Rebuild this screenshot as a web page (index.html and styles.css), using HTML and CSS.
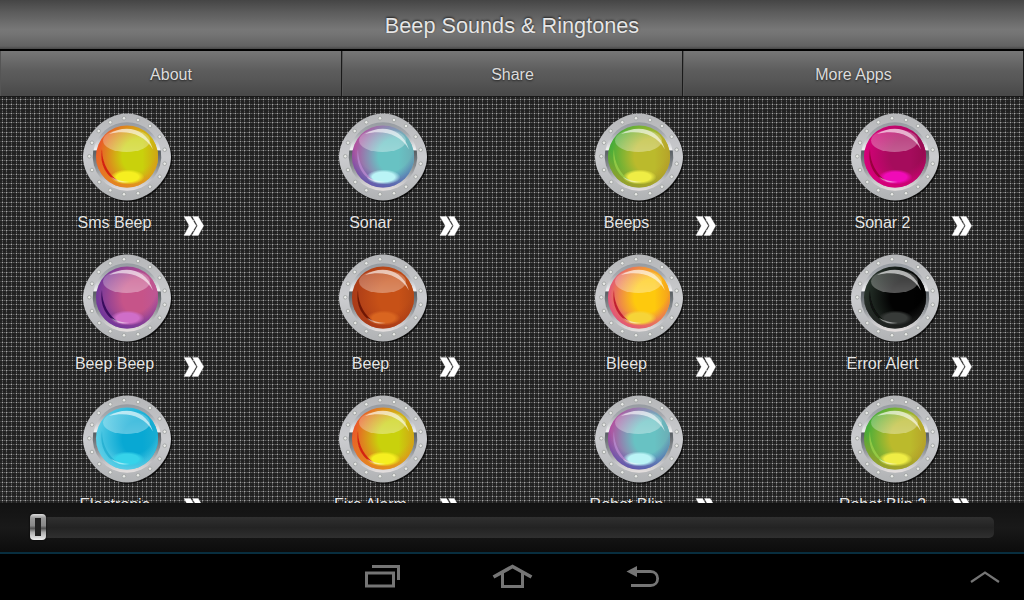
FILE: index.html
```html
<!DOCTYPE html>
<html lang="en">
<head>
    <meta charset="UTF-8">
    <meta name="viewport" content="width=device-width, initial-scale=1.0">
    <title>Beep Sounds &amp; Ringtones</title>
    <link rel="stylesheet" href="styles.css">
</head>
<body>
    <!-- shared shapes -->
    <svg class="defs" width="0" height="0">
        <defs>
            <pattern id="mesh" width="14" height="14" patternUnits="userSpaceOnUse">
                <rect width="14" height="14" fill="#212121"/>
                <g fill="#3e3e3e">
                    <path d="M0 2h14v1H0zM0 7h14v1H0zM0 11h14v1H0z"/>
                    <path d="M2 0h1v14H2zM6 0h1v14H6zM11 0h1v14H11z"/>
                </g>
                <g fill="#5c5c5c">
                    <path d="M4 2h1v1H4zM9 2h1v1H9zM13 2h1v1H13zM4 7h1v1H4zM9 7h1v1H9zM13 7h1v1H13zM4 11h1v1H4zM9 11h1v1H9zM13 11h1v1H13z"/>
                    <path d="M2 0h1v1H2zM6 0h1v1H6zM11 0h1v1H11zM2 4h1v1H2zM6 4h1v1H6zM11 4h1v1H11zM2 9h1v1H2zM6 9h1v1H6zM11 9h1v1H11z"/>
                </g>
                <g fill="#5a5a5a">
                    <path d="M6 3h1v1H6zM6 8h1v1H6zM6 12h1v1H6zM2 6h1v1H2zM11 6h1v1H11z"/>
                    <path d="M7 2h1v1H7zM7 7h1v1H7zM7 11h1v1H7zM10 2h1v1H10zM10 7h1v1H10zM10 11h1v1H10z"/>
                </g>
                <path fill="#a6a6a6" d="M2 2h1v1H2zM6 2h1v1H6zM11 2h1v1H11zM2 7h1v1H2zM6 7h1v1H6zM11 7h1v1H11zM2 11h1v1H2zM6 11h1v1H6zM11 11h1v1H11z"/>
            </pattern>
            <linearGradient id="metal" x1="0" y1="0" x2="0" y2="1">
                <stop offset="0" stop-color="#b5b6b8"/>
                <stop offset=".5" stop-color="#cbcccf"/>
                <stop offset="1" stop-color="#b0b2b4"/>
            </linearGradient>
            <linearGradient id="rimTop" x1="0" y1="0" x2="0" y2="1">
                <stop offset="0" stop-color="#969ba1"/>
                <stop offset=".4" stop-color="#a6a9ae"/>
                <stop offset="1" stop-color="#f4f4f5"/>
            </linearGradient>
            <linearGradient id="rimBottom" x1="0" y1="0" x2="0" y2="1">
                <stop offset="0" stop-color="#565c61"/>
                <stop offset=".4" stop-color="#898d91"/>
                <stop offset=".75" stop-color="#c5c5c8"/>
                <stop offset="1" stop-color="#e6e0df"/>
            </linearGradient>
            <linearGradient id="shine" x1="0" y1="0" x2="0" y2="1">
                <stop offset="0" stop-color="#fff" stop-opacity=".2"/>
                <stop offset="1" stop-color="#fff" stop-opacity=".33"/>
            </linearGradient>
            <filter id="soft" x="-20%" y="-20%" width="140%" height="140%">
                <feGaussianBlur stdDeviation=".7"/>
            </filter>
            <g id="frame">
                <path d="M45 1.500C68 1.500 89 24.500 89 45S68 88.500 45 88.500 1 65.500 1 45 22 1.500 45 1.500z" fill="#000" opacity=".7" transform="translate(1.200 1.200)" filter="url(#soft)"/>
                <path d="M45 1.500C68 1.500 89 24.500 89 45S68 88.500 45 88.500 1 65.500 1 45 22 1.500 45 1.500z" fill="url(#metal)"/>
                <g fill="#e9eae7" stroke="#a3a6a5" stroke-width=".9">
                    <circle cx="42" cy="6.3" r="1.8"/><circle cx="56" cy="8" r="1.8"/><circle cx="68" cy="14" r="1.8"/>
                    <circle cx="77.7" cy="24.7" r="1.8"/><circle cx="82.7" cy="37.7" r="1.8"/><circle cx="82.7" cy="51.7" r="1.8"/>
                    <circle cx="77.7" cy="64.7" r="1.8"/><circle cx="68" cy="74.7" r="1.8"/><circle cx="56" cy="81.3" r="1.8"/>
                    <circle cx="42" cy="82.3" r="1.8"/><circle cx="28.3" cy="78.3" r="1.8"/><circle cx="17.3" cy="70" r="1.8"/>
                    <circle cx="10" cy="58" r="1.8"/><circle cx="7.3" cy="44.3" r="1.8"/><circle cx="10" cy="30.7" r="1.8"/>
                    <circle cx="16.7" cy="19" r="1.8"/><circle cx="28.3" cy="10.3" r="1.8"/>
                </g>
                <path d="M11.5 38.5A34 34 0 0 1 78.5 38.5z" fill="url(#rimTop)"/>
                <path d="M11.2 38.5A34.3 34.3 0 1 0 78.8 38.5z" fill="url(#rimBottom)"/>
            </g>
            <g id="gloss">
                <ellipse cx="44.5" cy="28.5" rx="23.5" ry="11.5" fill="url(#shine)"/>
                <path d="M27 22C41 13 64 14 71 37.500 62 22 45 17.500 27 22z" fill="#fff" opacity=".6"/>
            </g>
            <symbol id="more" viewBox="0 0 22 22">
                <path d="M1 1.500h6.500l5.700 9.300L7 20.500H1l5.300-9.700zM9.500 1.500h5.700l5.500 9.300-5.500 9.700H9l5.500-9.700z" fill="#fff" stroke="#eee" stroke-opacity=".4" stroke-width=".8"/>
            </symbol>
        </defs>
    </svg>

    <header class="title-bar">
        <h1>Beep Sounds &amp; Ringtones</h1>
    </header>

    <nav class="tabs">
        <a class="tab">About</a>
        <a class="tab">Share</a>
        <a class="tab">More Apps</a>
    </nav>

    <main class="board">
        <svg class="mesh"><rect width="100%" height="100%" fill="url(#mesh)"/></svg>
        <div class="grid" id="grid"></div>
    </main>

    <footer class="player">
        <div class="track"><div class="thumb"></div></div>
    </footer>

    <div class="system-bar">
        <svg class="keys" viewBox="0 0 300 46" fill="none" stroke="#757575">
            <path d="M6.500 19h27v13h-27z" stroke-width="3"/>
            <path d="M12 12.500h26.500V26" stroke-width="3"/>
            <path d="M133.500 23l19-10.500 19 10.500" stroke-width="3.600"/>
            <path d="M142.500 19v13.500h20V19" stroke-width="3"/>
            <path d="M276 17.500h14.500c9.500 0 9.500 14 0 14H271" stroke-width="2.800"/>
            <path d="M266.500 17.500l10.500-5.500v11z" fill="#757575" stroke="none"/>
        </svg>
        <svg class="expand" viewBox="0 0 30 14" fill="none" stroke="#757575" stroke-width="2.200">
            <path d="M1 12L15 2.500 29 12"/>
        </svg>
    </div>

    <script>
        // edge, middle, right, bottom glow, left crescent
        const colors = {
            citrus: ['#ee4a2c', '#c9d10c', '#d0a514', '#f6ef20', '#d01010'],
            aqua:   ['#b9449c', '#68c2c3', '#6cadb5', '#baf4f6', '#b98bd0'],
            lime:   ['#37aa3b', '#bbba2c', '#b6a329', '#efed45', '#9ad04a'],
            pink:   ['#d9007b', '#a50c5c', '#960a50', '#f00bb7', '#8c0030'],
            violet: ['#6d359b', '#c65489', '#bd5795', '#cf6ec8', '#260450'],
            rust:   ['#a83a18', '#c75117', '#b44816', '#d96520', '#601006'],
            amber:  ['#e0507c', '#fec90d', '#f5a01d', '#f6d438', '#b70e28'],
            black:  ['#2b382f', '#020202', '#000000', '#373a38', '#080a08'],
            blue:   ['#5ecfe7', '#08a8d3', '#1aaed2', '#36d3ea', '#23aed0']
        };
        // tint along the lower edge where it differs from the left one
        const lowColors = { citrus: '#e58a22', aqua: '#4a55ae', lime: '#b09a28', black: '#222222' };
        const sounds = [
            ['Sms Beep', 'citrus'], ['Sonar', 'aqua'], ['Beeps', 'lime'], ['Sonar 2', 'pink'],
            ['Beep Beep', 'violet'], ['Beep', 'rust'], ['Bleep', 'amber'], ['Error Alert', 'black'],
            ['Electronic', 'blue'], ['Fire Alarm', 'citrus'], ['Robot Blip', 'aqua'], ['Robot Blip 2', 'lime']
        ];

        document.getElementById('grid').innerHTML = sounds.map(([name, key], i) => {
            const [edge, mid, right, glow, crescent] = colors[key];
            const low = lowColors[key] || edge;
            return `
            <div class="sound">
                <svg class="button" viewBox="0 0 90 90">
                    <defs>
                        <radialGradient id="ball${i}" cx=".72" cy=".5" r=".74">
                            <stop offset="0" stop-color="${mid}"/>
                            <stop offset=".4" stop-color="${mid}"/>
                            <stop offset="1" stop-color="${edge}"/>
                        </radialGradient>
                        <radialGradient id="low${i}" cx=".52" cy=".3" r=".72">
                            <stop offset=".65" stop-color="${low}" stop-opacity="0"/>
                            <stop offset="1" stop-color="${low}" stop-opacity=".85"/>
                        </radialGradient>
                        <linearGradient id="side${i}">
                            <stop offset=".75" stop-color="${right}" stop-opacity="0"/>
                            <stop offset="1" stop-color="${right}"/>
                        </linearGradient>
                        <radialGradient id="glow${i}">
                            <stop offset=".65" stop-color="${glow}"/>
                            <stop offset="1" stop-color="${glow}" stop-opacity="0"/>
                        </radialGradient>
                    </defs>
                    <use href="#frame"/>
                    <circle cx="45" cy="44.500" r="31" fill="url(#ball${i})"/>
                    <circle cx="45" cy="44.500" r="31" fill="url(#side${i})"/>
                    <circle cx="45" cy="44.500" r="31" fill="url(#low${i})"/>
                    <ellipse cx="45.500" cy="65" rx="17" ry="7.500" fill="url(#glow${i})"/>
                    <path d="M20 37C17 52 25 66 36 69 27 62 20 52 20 37z" fill="${crescent}" opacity=".8" filter="url(#soft)"/>
                    <path d="M29 65C35 71 42 71 48 70 40 69.500 35 68 29 65z" fill="#fff" opacity=".5"/>
                    <use href="#gloss"/>
                </svg>
                <div class="caption">
                    <span class="name">${name}</span>
                    <svg class="more"><use href="#more"/></svg>
                </div>
            </div>`;
        }).join('');
    </script>
</body>
</html>
```

FILE: styles.css
```css
* {
    box-sizing: border-box;
}
body {
    margin: 0;
    width: 1024px;
    height: 600px;
    display: flex;
    flex-direction: column;
    overflow: hidden;
    background: #000;
    color: #e6e6e6;
    font-family: "Liberation Sans", Arial, sans-serif;
    font-size: 16px;
}
.defs {
    position: absolute;
}
.title-bar {
    height: 51px;
    flex: none;
    display: flex;
    align-items: center;
    justify-content: center;
    border-bottom: 2px solid #000;
    background: linear-gradient(#454545, #5c5c5c 25%, #777 60%, #747474 70%, #626262 94%, #484848);
}
h1 {
    margin: 3px 0 0;
    font-size: 21.7px;
    font-weight: normal;
    text-shadow: 0 -1px 2px #222;
}
.tabs {
    height: 46px;
    flex: none;
    display: grid;
    grid-template-columns: 342px 341px 341px;
    border-bottom: 1px solid #181818;
}
.tab {
    display: flex;
    align-items: center;
    justify-content: center;
    padding: 2px 0 0 1px;
    border-right: 1px solid #1a1a1a;
    box-shadow: inset 1px 0 #555;
    background: linear-gradient(#777, #5c5c5c 45%, #585858 60%, #484848);
    color: #dcdcdc;
    text-shadow: 0 1px 2px #222;
}
.board {
    height: 406px;
    flex: none;
    display: grid;
    overflow: hidden;
}
.mesh,
.grid {
    grid-area: 1 / 1;
}
.mesh {
    width: 1024px;
    height: 406px;
}
.grid {
    height: 406px;
    display: grid;
    grid-template-columns: repeat(4, 256px);
    grid-auto-rows: 141px;
    padding-top: 15px;
}
.button {
    display: block;
    width: 90px;
    height: 90px;
    margin-left: 82px;
}
.caption {
    display: flex;
    padding: 11px 0 0 45px;
}
.name {
    width: 138px;
    padding-left: 1px;
    text-align: center;
    line-height: 19px;
    text-shadow: 0 0 2px #111;
}
.more {
    width: 22px;
    height: 22px;
    margin-top: 2px;
}
.player {
    height: 49px;
    flex: none;
    padding: 14px 30px 0;
    background: linear-gradient(#121212, #191919 50%, #0c0c0c);
}
.track {
    display: flex;
    height: 21px;
    border-radius: 5px;
    background: linear-gradient(#303030, #232323 50%, #2f2f2f);
}
.thumb {
    width: 16px;
    height: 26px;
    margin-top: -3px;
    padding: 4px 5px;
    border-radius: 4px;
    background: linear-gradient(#ddd, #999 15%, #888 45%, #505050 55%, #aaa 70%, #eee);
    box-shadow: 0 0 2px #000;
}
.thumb::before {
    content: "";
    display: block;
    height: 18px;
    background: #202020;
}
.system-bar {
    height: 48px;
    flex: none;
    display: flex;
    justify-content: space-between;
    padding: 0 24px 0 360px;
    border-top: 2px solid #082e3f;
}
.keys {
    width: 300px;
    height: 46px;
}
.expand {
    width: 30px;
    height: 14px;
    margin-top: 16px;
}
```
